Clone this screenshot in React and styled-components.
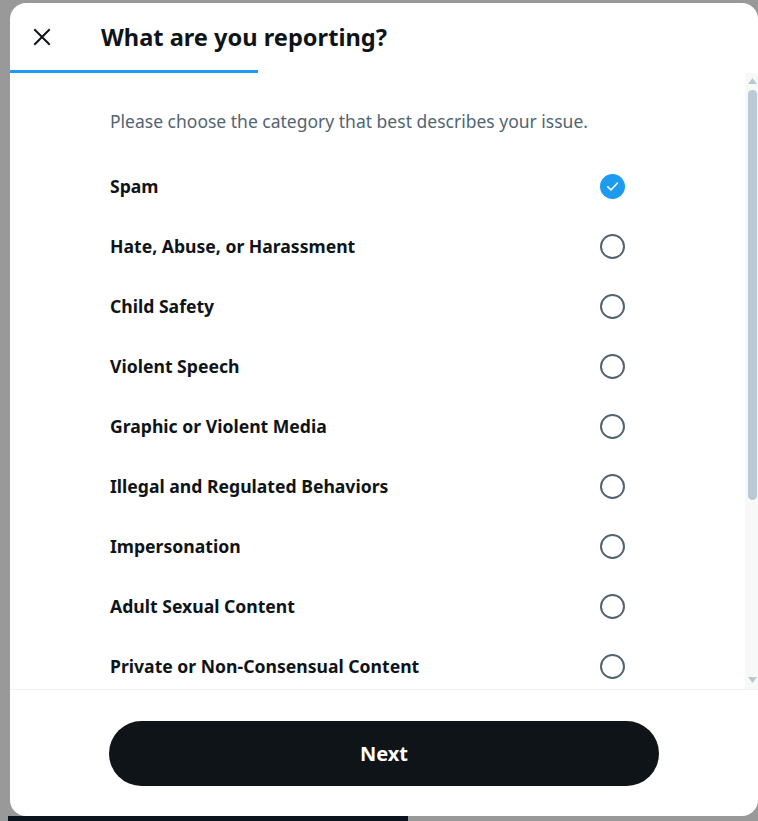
import React, { useState } from 'react'
import styled, { createGlobalStyle } from 'styled-components'

const GlobalStyle = createGlobalStyle`
  html, body {
    margin: 0;
    padding: 0;
    background: #999999;
    font-family: "Segoe UI", "Noto Sans", "Open Sans", sans-serif;
  }
  * { box-sizing: border-box; }
`

const categories = [
  'Spam',
  'Hate, Abuse, or Harassment',
  'Child Safety',
  'Violent Speech',
  'Graphic or Violent Media',
  'Illegal and Regulated Behaviors',
  'Impersonation',
  'Adult Sexual Content',
  'Private or Non-Consensual Content',
]

const App = () => {
  const [selected, setSelected] = useState(0)
  return (
    <>
      <GlobalStyle />
      <Backdrop>
        <Modal>
          <Header>
            <CloseButton aria-label="Close">
              <svg width="18" height="18" viewBox="0 0 18 18">
                <path d="M2 2L16 16M16 2L2 16" stroke="#0f1419" strokeWidth="2" strokeLinecap="square" />
              </svg>
            </CloseButton>
            <Title>What are you reporting?</Title>
          </Header>
          <Progress>
            <ProgressFill />
          </Progress>
          <Body>
            <Scroller>
              <Content>
                <Subtitle>Please choose the category that best describes your issue.</Subtitle>
                {categories.map((c, i) => (
                  <Row key={c} onClick={() => setSelected(i)}>
                    <Label>{c}</Label>
                    <Radio $checked={selected === i}>
                      {selected === i && (
                        <svg width="15" height="15" viewBox="0 0 24 24">
                          <path d="M4.5 12.5l5 5L20 6.5" fill="none" stroke="#fff" strokeWidth="2.6" strokeLinecap="round" strokeLinejoin="round" />
                        </svg>
                      )}
                    </Radio>
                  </Row>
                ))}
              </Content>
            </Scroller>
            <ScrollTrack>
              <Arrow>
                <svg width="9" height="6" viewBox="0 0 9 6"><path d="M4.5 0L9 6H0z" fill="#b9cad3" /></svg>
              </Arrow>
              <Thumb />
              <TrackRest />
              <Arrow>
                <svg width="9" height="6" viewBox="0 0 9 6"><path d="M0 0H9L4.5 6z" fill="#b9cad3" /></svg>
              </Arrow>
            </ScrollTrack>
          </Body>
          <Footer>
            <NextButton>Next</NextButton>
          </Footer>
        </Modal>
        <BottomStrip />
      </Backdrop>
    </>
  )
}

export default App

const Backdrop = styled.div`
  width: 758px;
  height: 821px;
  padding: 3px 0 0 10px;
  overflow: hidden;
`

const Modal = styled.div`
  width: 748px;
  height: 813px;
  background: #fff;
  border-radius: 16px;
  display: flex;
  flex-direction: column;
  overflow: hidden;
`

const BottomStrip = styled.div`
  width: 400px;
  height: 5px;
  margin-left: -2px;
  background: #0b131c;
`

const Header = styled.div`
  height: 67px;
  display: flex;
  align-items: center;
  padding: 0 0 0 23px;
  flex-shrink: 0;
`

const CloseButton = styled.div`
  width: 18px;
  height: 18px;
  display: flex;
  align-items: center;
  justify-content: center;
  margin-right: 50px;
  margin-top: 1px;
`

const Title = styled.h2`
  margin: 0;
  font-size: 23.6px;
  font-weight: 700;
  color: #0f1419;
  letter-spacing: 0;
`

const Progress = styled.div`
  height: 3px;
  flex-shrink: 0;
`

const ProgressFill = styled.div`
  width: 248px;
  height: 3px;
  background: #1d9bf0;
`

const Body = styled.div`
  flex: 1;
  min-height: 0;
  display: flex;
  border-bottom: 1px solid #eff3f4;
`

const Scroller = styled.div`
  flex: 1;
  overflow: hidden;
`

const ScrollTrack = styled.div`
  width: 13px;
  flex-shrink: 0;
  background: #f7f9f9;
  display: flex;
  flex-direction: column;
  align-items: flex-end;
  padding: 1px 0 2px;
`

const Arrow = styled.div`
  width: 11px;
  height: 14px;
  display: flex;
  align-items: center;
  justify-content: center;
`

const Thumb = styled.div`
  width: 9px;
  height: 410px;
  margin: 2px 1px 0 0;
  border-radius: 5px;
  background: #b9cad3;
`

const TrackRest = styled.div`
  flex: 1;
`

const Content = styled.div`
  width: 550px;
  margin-left: 100px;
  padding-top: 35px;
`

const Subtitle = styled.p`
  margin: 0 0 22px;
  font-size: 17.5px;
  line-height: 26px;
  color: #536471;
`

const Row = styled.div`
  height: 60px;
  display: flex;
  align-items: center;
  justify-content: space-between;
  padding-right: 35px;
  cursor: pointer;
`

const Label = styled.span`
  font-size: 17.6px;
  font-weight: 700;
  color: #0f1419;
`

const Radio = styled.span`
  width: 25px;
  height: 25px;
  border-radius: 50%;
  border: ${(p) => (p.$checked ? 'none' : '2px solid #536471')};
  background: ${(p) => (p.$checked ? '#1d9bf0' : 'transparent')};
  display: flex;
  align-items: center;
  justify-content: center;
`

const Footer = styled.div`
  height: 126px;
  flex-shrink: 0;
  display: flex;
  justify-content: center;
  padding-top: 31px;
`

const NextButton = styled.button`
  width: 550px;
  height: 65px;
  border: none;
  border-radius: 999px;
  background: #0f1419;
  color: #fff;
  font-family: inherit;
  font-size: 20px;
  font-weight: 700;
  cursor: pointer;
`
